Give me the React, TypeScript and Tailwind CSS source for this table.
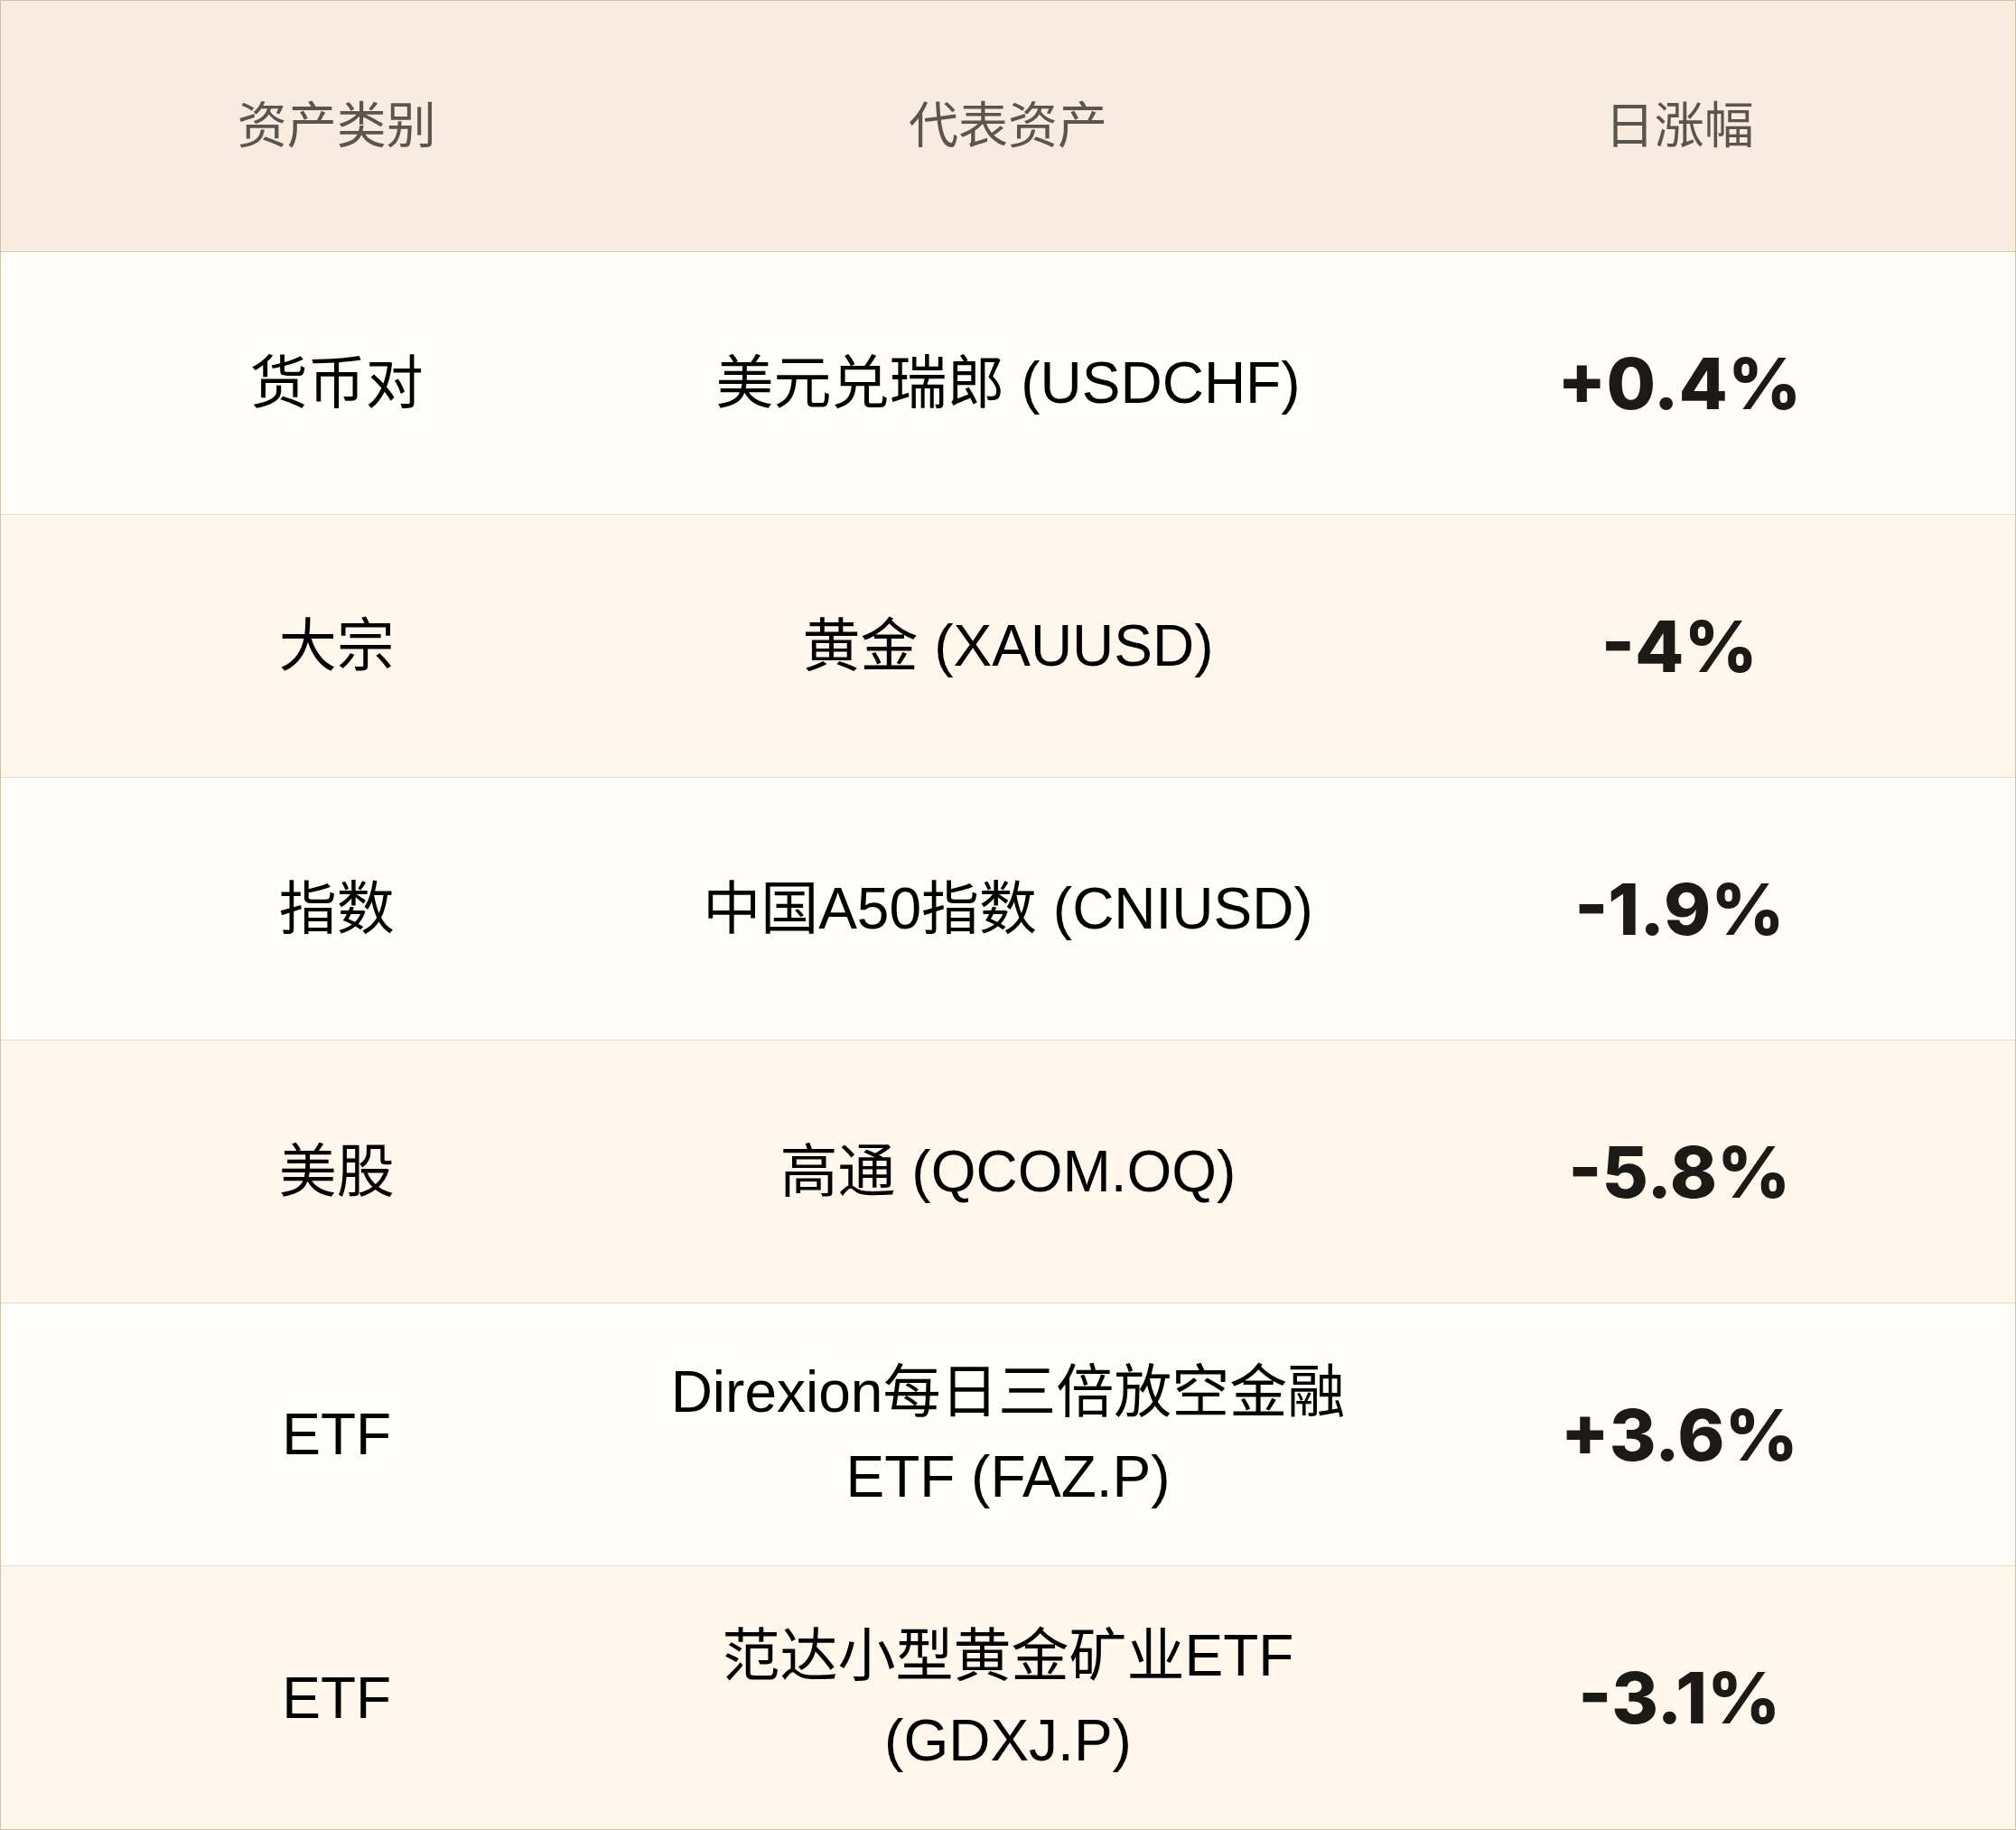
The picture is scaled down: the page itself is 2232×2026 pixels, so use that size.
import React from 'react';

type Row = {
  category: string;
  asset: string[];
  change: string;
};

const rows: Row[] = [
  { category: '货币对', asset: ['美元兑瑞郎 (USDCHF)'], change: '+0.4%' },
  { category: '大宗', asset: ['黄金 (XAUUSD)'], change: '-4%' },
  { category: '指数', asset: ['中国A50指数 (CNIUSD)'], change: '-1.9%' },
  { category: '美股', asset: ['高通 (QCOM.OQ)'], change: '-5.8%' },
  { category: 'ETF', asset: ['Direxion每日三倍放空金融', 'ETF (FAZ.P)'], change: '+3.6%' },
  { category: 'ETF', asset: ['范达小型黄金矿业ETF', '(GDXJ.P)'], change: '-3.1%' },
];

const cjk = "font-['Liberation_Sans','Noto_Sans_CJK_SC',sans-serif]";

const App: React.FC = () => {
  return (
    <div className="w-[2232px] h-[2026px] border border-[#d8bea4] bg-[#fffdf9] flex flex-col overflow-hidden">
      {/* Header */}
      <div className={`h-[278px] shrink-0 grid grid-cols-3 items-center bg-[#f8ebdf] border-b border-[#dec6b0] text-[55px] text-[#5a554f] ${cjk}`}>
        <div className="text-center">资产类别</div>
        <div className="text-center">代表资产</div>
        <div className="text-center">日涨幅</div>
      </div>

      {/* Body */}
      {rows.map((row, i) => (
        <div
          key={i}
          className={`h-[291px] shrink-0 grid grid-cols-3 items-center ${
            i % 2 === 0 ? 'bg-[#fffdf9]' : 'bg-[#fff7ec]'
          } ${i < rows.length - 1 ? 'border-b border-[#e8dbcf]' : ''}`}
        >
          <div className={`text-center text-[64px] text-black ${cjk}`}>{row.category}</div>
          <div className={`flex flex-col items-center text-[64px] leading-[94px] text-black ${cjk}`}>
            {row.asset.map((line) => (
              <span key={line} className="whitespace-nowrap">
                {line}
              </span>
            ))}
          </div>
          <div className="text-center text-[79px] font-extrabold text-[#1c1a17] font-['Inter',sans-serif]">
            {row.change}
          </div>
        </div>
      ))}
    </div>
  );
};

export default App;
